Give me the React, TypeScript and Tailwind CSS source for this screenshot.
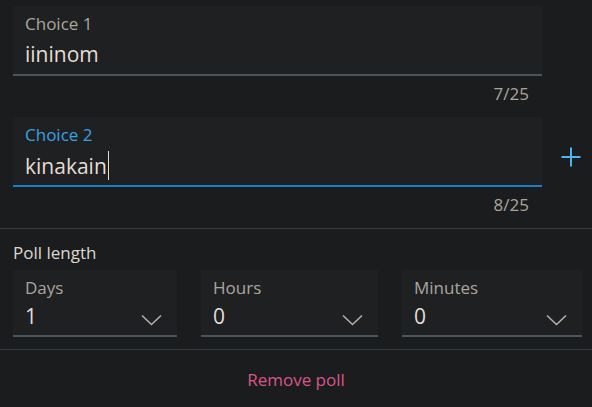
interface Choice {
  label: string;
  value: string;
  focused?: boolean;
}

const choices: Choice[] = [
  { label: 'Choice 1', value: 'iininom' },
  { label: 'Choice 2', value: 'kinakain', focused: true },
];

const durations = [
  { label: 'Days', value: '1', width: 'w-[164px]' },
  { label: 'Hours', value: '0', width: 'w-[177px]' },
  { label: 'Minutes', value: '0', width: 'w-[180px]' },
];

function PlusIcon() {
  return (
    <svg width="20" height="20" viewBox="0 0 20 20" className="text-[#4cb3f5]">
      <path d="M10 0.5v19M0.5 10h19" stroke="currentColor" strokeWidth="2" fill="none" />
    </svg>
  );
}

function Chevron() {
  return (
    <svg width="21" height="12" viewBox="0 0 21 12" className="text-[#b5b0a8]">
      <path d="M1 1.5l9.5 9 9.5-9" stroke="currentColor" strokeWidth="1.6" fill="none" />
    </svg>
  );
}

function ChoiceField({ choice }: { choice: Choice }) {
  return (
    <div>
      <div className="flex">
        <div
          className={`flex h-[70px] w-[529px] flex-col border-b-2 bg-[#1f2022] px-[12px] pt-[7px] ${
            choice.focused ? 'border-[#1a7fc7]' : 'border-[#4b545d]'
          }`}
        >
          <span
            className={`text-[17px] leading-[22px] ${
              choice.focused ? 'text-[#3aa0e3]' : 'text-[#aaa69e]'
            }`}
          >
            {choice.label}
          </span>
          <span className="mt-[5px] flex items-center text-[21px] leading-[28px] text-[#e2ded6]">
            {choice.value}
            {choice.focused && <span className="ml-[1px] h-[29px] w-px bg-[#e2ded6]" />}
          </span>
        </div>
        {choice.focused && (
          <div className="pl-[19px] pt-[30px]">
            <PlusIcon />
          </div>
        )}
      </div>
      <div className="h-[41px] w-[529px] pr-[13px] pt-[7px] text-right text-[17px] leading-[22px] text-[#aaa69e]">
        {choice.value.length}/25
      </div>
    </div>
  );
}

export default function App() {
  return (
    <div className="h-[407px] w-[592px] overflow-hidden bg-[#1b1c1e] font-['Open_Sans',sans-serif]">
      <div className="pl-[13px] pt-[6px]">
        {choices.map((choice) => (
          <ChoiceField key={choice.label} choice={choice} />
        ))}
      </div>

      <div className="h-px bg-[#363d45]" />

      <div className="pl-[13px] pt-[13px]">
        <p className="text-[17px] leading-[22px] text-[#dcd8d0]">Poll length</p>
        <div className="mt-[6px] flex gap-[24px]">
          {durations.map((d) => (
            <div
              key={d.label}
              className={`${d.width} flex h-[67px] shrink-0 flex-col border-b-2 border-[#4b545d] bg-[#1f2022] pl-[12px] pr-[13px] pt-[7px]`}
            >
              <span className="text-[17px] leading-[22px] text-[#aaa69e]">{d.label}</span>
              <div className="mt-[3px] flex items-center justify-between">
                <span className="text-[21px] leading-[28px] text-[#e2ded6]">{d.value}</span>
                <div className="mr-[2px] mt-[8px]">
                  <Chevron />
                </div>
              </div>
            </div>
          ))}
        </div>
      </div>

      <div className="mt-[12px] h-px bg-[#363d45]" />

      <div className="pt-[18px] text-center text-[17px] leading-[24px] text-[#d9558a]">Remove poll</div>
    </div>
  );
}
